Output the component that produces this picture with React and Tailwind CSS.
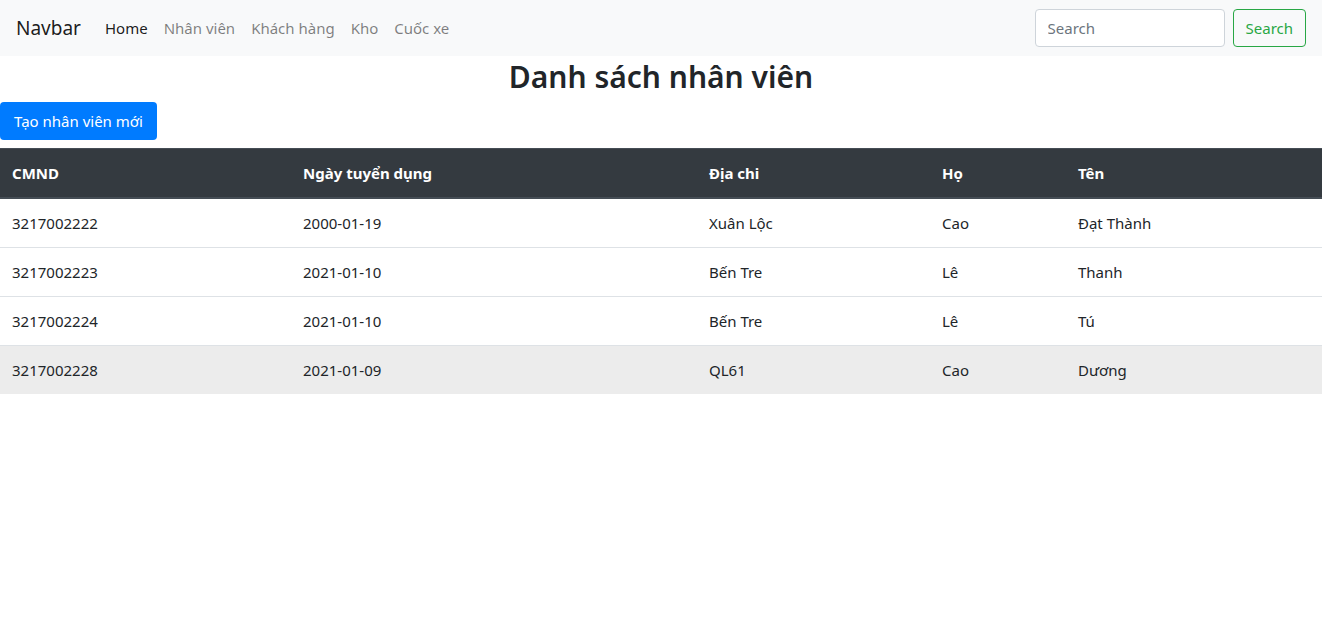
import React from 'react';

const rows = [
  { cmnd: '3217002222', ngay: '2000-01-19', diachi: 'Xuân Lộc', ho: 'Cao', ten: 'Đạt Thành' },
  { cmnd: '3217002223', ngay: '2021-01-10', diachi: 'Bến Tre', ho: 'Lê', ten: 'Thanh' },
  { cmnd: '3217002224', ngay: '2021-01-10', diachi: 'Bến Tre', ho: 'Lê', ten: 'Tú' },
  { cmnd: '3217002228', ngay: '2021-01-09', diachi: 'QL61', ho: 'Cao', ten: 'Dương', hover: true },
];

export default function App() {
  return (
    <div className="min-h-screen bg-white text-[#212529] font-['Segoe_UI','Noto_Sans',Roboto,sans-serif] text-[15px] leading-6">
      <nav className="flex items-center justify-between bg-[#f8f9fa] px-4 py-2 h-14">
        <div className="flex items-center">
          <a className="text-[19px] leading-[30px] mr-4 text-[rgba(0,0,0,0.9)]">Navbar</a>
          <a className="px-2 text-[rgba(0,0,0,0.9)]">Home</a>
          <a className="px-2 text-[rgba(0,0,0,0.5)]">Nhân viên</a>
          <a className="px-2 text-[rgba(0,0,0,0.5)]">Khách hàng</a>
          <a className="px-2 text-[rgba(0,0,0,0.5)]">Kho</a>
          <a className="px-2 text-[rgba(0,0,0,0.5)]">Cuốc xe</a>
        </div>
        <form onSubmit={(e) => e.preventDefault()} className="flex items-center gap-2">
          <input
            type="text"
            placeholder="Search"
            className="w-[190px] h-[38px] border border-[#ced4da] rounded px-3 bg-white placeholder:text-[#6c757d] outline-none"
          />
          <button className="h-[38px] px-3 border border-[#28a745] text-[#28a745] rounded">Search</button>
        </form>
      </nav>

      <h2 className="text-[30px] leading-[38px] font-semibold text-center mt-[2px] mb-[6px]">Danh sách nhân viên</h2>
      <button className="h-[38px] px-[14px] bg-[#007bff] text-white rounded mb-2">Tạo nhân viên mới</button>

      <table className="w-full border-collapse text-left">
        <thead>
          <tr className="bg-[#343a40] text-white">
            <th className="w-[291px] px-3 py-3 font-bold border-t border-b-2 border-[#454d55]">CMND</th>
            <th className="w-[406px] px-3 py-3 font-bold border-t border-b-2 border-[#454d55]">Ngày tuyển dụng</th>
            <th className="w-[233px] px-3 py-3 font-bold border-t border-b-2 border-[#454d55]">Địa chi</th>
            <th className="w-[136px] px-3 py-3 font-bold border-t border-b-2 border-[#454d55]">Họ</th>
            <th className="px-3 py-3 font-bold border-t border-b-2 border-[#454d55]">Tên</th>
          </tr>
        </thead>
        <tbody>
          {rows.map((r) => (
            <tr key={r.cmnd} className={r.hover ? 'bg-[#ececec]' : ''}>
              <td className="px-3 py-3 border-t border-[#dee2e6]">{r.cmnd}</td>
              <td className="px-3 py-3 border-t border-[#dee2e6]">{r.ngay}</td>
              <td className="px-3 py-3 border-t border-[#dee2e6]">{r.diachi}</td>
              <td className="px-3 py-3 border-t border-[#dee2e6]">{r.ho}</td>
              <td className="px-3 py-3 border-t border-[#dee2e6]">{r.ten}</td>
            </tr>
          ))}
        </tbody>
      </table>
    </div>
  );
}
